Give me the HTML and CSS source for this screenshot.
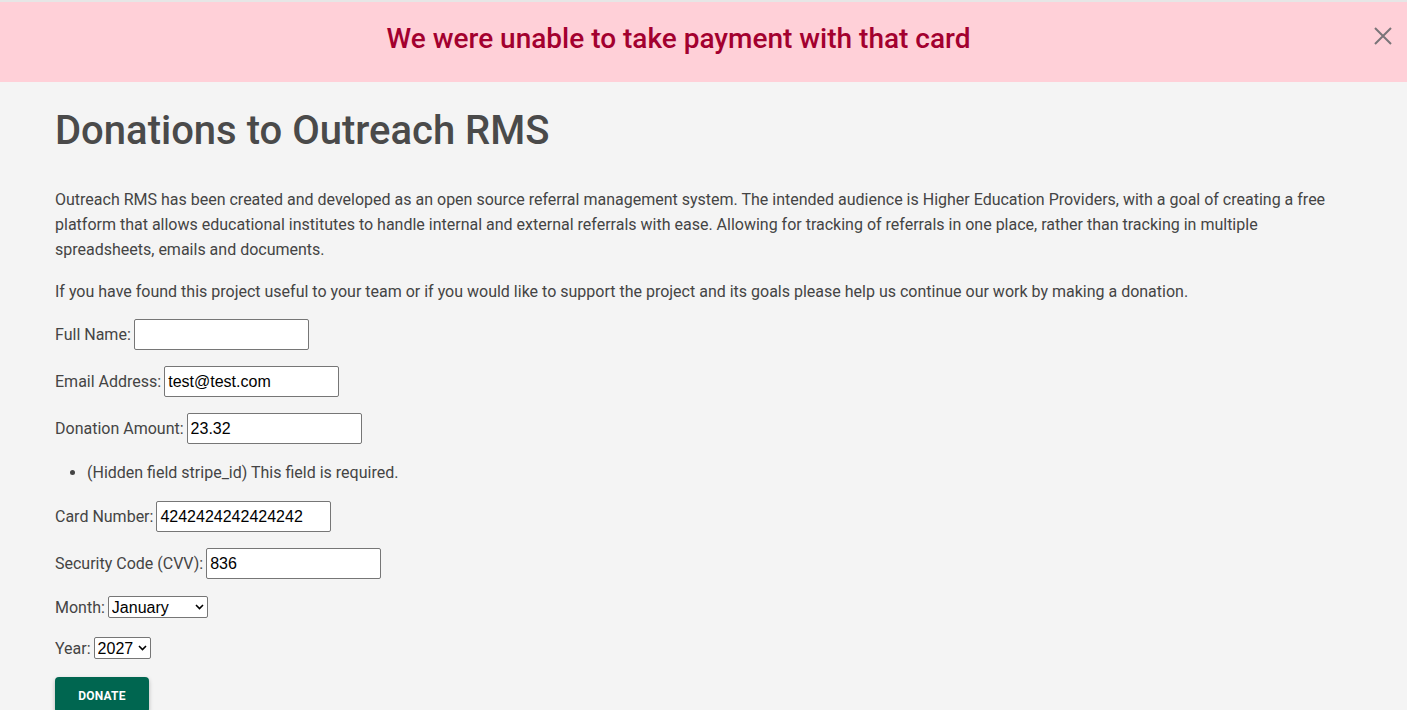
FILE: index.html
```html
<!DOCTYPE html>
<html lang="en">
<head>
<meta charset="utf-8">
<title>Donations to Outreach RMS</title>
<link rel="stylesheet" href="styles.css">
</head>
<body>
<div class="topline"></div>
<div class="alert">
  <span class="alert-text">We were unable to take payment with that card</span>
  <button class="alert-close" aria-label="Close">
    <svg width="18" height="18" viewBox="0 0 18 18"><path d="M1 1 L17 17 M17 1 L1 17" stroke="#7a7478" stroke-width="2" fill="none"/></svg>
  </button>
</div>
<main class="content">
  <h1 class="title">Donations to Outreach RMS</h1>
  <p class="text">Outreach RMS has been created and developed as an open source referral management system. The intended audience is Higher Education Providers, with a goal of creating a free platform that allows educational institutes to handle internal and external referrals with ease. Allowing for tracking of referrals in one place, rather than tracking in multiple spreadsheets, emails and documents.</p>
  <p class="text">If you have found this project useful to your team or if you would like to support the project and its goals please help us continue our work by making a donation.</p>
  <form class="form">
    <div class="row"><label for="name">Full Name:</label> <input id="name" class="field" type="text"></div>
    <div class="row"><label for="email">Email Address:</label> <input id="email" class="field" type="text" value="test@test.com"></div>
    <div class="row"><label for="amount">Donation Amount:</label> <input id="amount" class="field" type="text" value="23.32"></div>
    <ul class="errors"><li>(Hidden field stripe_id) This field is required.</li></ul>
    <div class="row"><label for="card">Card Number:</label> <input id="card" class="field" type="text" value="4242424242424242"></div>
    <div class="row"><label for="cvv">Security Code (CVV):</label> <input id="cvv" class="field" type="text" value="836"></div>
    <div class="row row-sel"><label for="month">Month:</label>
      <span class="selwrap"><select id="month" class="sel sel-month"><option>January</option></select><svg class="chev" width="9" height="6" viewBox="0 0 9 6"><path d="M1 1 L4.5 4.5 L8 1" stroke="#000" stroke-width="1.6" fill="none"/></svg></span>
    </div>
    <div class="row row-sel"><label for="year">Year:</label>
      <span class="selwrap"><select id="year" class="sel sel-year"><option>2027</option></select><svg class="chev" width="9" height="6" viewBox="0 0 9 6"><path d="M1 1 L4.5 4.5 L8 1" stroke="#000" stroke-width="1.6" fill="none"/></svg></span>
    </div>
    <button class="donate" type="button">DONATE</button>
  </form>
</main>
</body>
</html>
```

FILE: styles.css
```css
html, body {
  margin: 0;
  padding: 0;
  background: #f4f4f4;
  font-family: Roboto, "Liberation Sans", sans-serif;
  color: #4a4a4a;
  overflow: hidden;
}

.topline {
  height: 2px;
  background: #e6e6e6;
}

.alert {
  position: relative;
  height: 80px;
  background: #ffd0d8;
  display: flex;
  align-items: center;
  justify-content: center;
  padding-right: 50px;
  box-sizing: border-box;
}

.alert-text {
  font-size: 28px;
  font-weight: 500;
  color: #a3002f;
  margin-top: -8px;
}

.alert-close {
  position: absolute;
  right: 15px;
  top: 25px;
  border: 0;
  background: none;
  padding: 0;
  width: 18px;
  height: 18px;
}

.content {
  padding: 0 55px;
}

.title {
  margin: 0;
  padding-top: 24px;
  font-size: 40px;
  font-weight: 500;
  line-height: 50px;
  color: #4a4a4a;
}

.text {
  font-size: 16px;
  line-height: 25px;
  margin: 31px 0 17px;
  color: #444;
}

.text + .text {
  margin-top: 17px;
  margin-bottom: 15px;
}

.form {
  margin: 0;
}

.row {
  display: flex;
  align-items: center;
  gap: 3px;
  height: 31px;
  margin-bottom: 16px;
  font-size: 16px;
}

.row label {
  color: #444;
}

.field {
  box-sizing: border-box;
  width: 175px;
  height: 31px;
  border: 1px solid #767676;
  border-radius: 2px;
  background: #fff;
  font-family: "Liberation Sans", Arial, sans-serif;
  font-size: 16px;
  color: #000;
  padding: 1px 3px;
}

.row-sel {
  height: 24px;
  margin-bottom: 17px;
}

.selwrap {
  position: relative;
  display: inline-flex;
}

.sel {
  -webkit-appearance: none;
  appearance: none;
  box-sizing: border-box;
  height: 22px;
  border: 1px solid #767676;
  border-radius: 2px;
  background: #fff;
  font-family: "Liberation Sans", Arial, sans-serif;
  font-size: 16px;
  color: #000;
  padding: 0 14px 0 3px;
}

.chev {
  position: absolute;
  right: 4px;
  top: 8px;
  pointer-events: none;
}

.sel-month { width: 100px; }
.sel-year { width: 57px; }

.errors {
  margin: 0 0 16px;
  padding-top: 1px;
  padding-left: 32px;
  height: 24px;
  line-height: 24px;
  font-size: 16px;
  color: #444;
}

.donate {
  display: block;
  width: 94px;
  height: 36px;
  border: 0;
  border-radius: 4px;
  background: #006650;
  color: #fff;
  font-family: Roboto, sans-serif;
  font-weight: 700;
  font-size: 12px;
  letter-spacing: 0.2px;
  box-shadow: 0 2px 4px rgba(0,0,0,0.25);
  padding: 2px 0 0;
}
```
